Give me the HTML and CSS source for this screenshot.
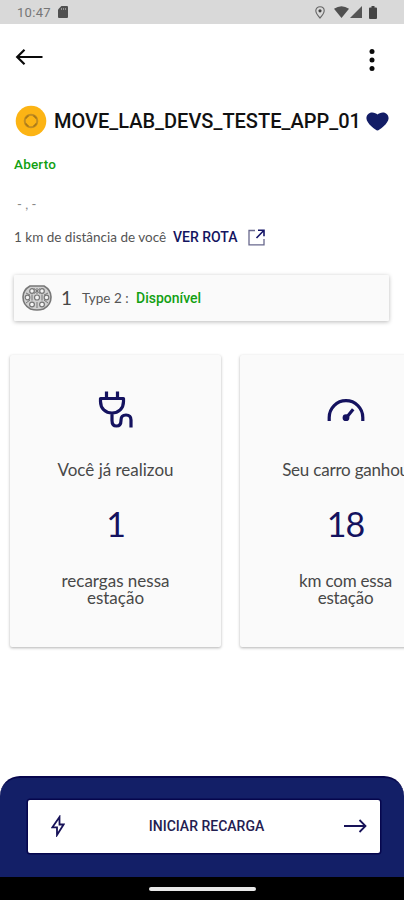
FILE: index.html
```html
<!DOCTYPE html>
<html lang="pt-BR">
<head>
<meta charset="utf-8">
<meta name="viewport" content="width=device-width, initial-scale=1">
<title>Estação de recarga</title>
<link rel="stylesheet" href="styles.css">
</head>
<body>
<div class="screen">
  <header class="status">
    <span class="clock">10:47</span>
    <svg class="sd" width="10" height="12" viewBox="0 0 10 12"><path d="M3.4 0H9q1 0 1 1v10q0 1-1 1H1q-1 0-1-1V3.6z" fill="#505050"/><path d="M3.5 2v2M5.5 2v2M7.5 2v2" stroke="#a5a5a5" stroke-width=".8"/></svg>
    <svg class="pin" width="10" height="13" viewBox="0 0 10 13"><path d="M5 .7C2.600.7.8 2.400.8 4.800.8 7.500 5 12 5 12s4.200-4.500 4.200-7.200C9.200 2.400 7.400.7 5 .7z" fill="none" stroke="#666" stroke-width="1.100"/><circle cx="5" cy="4.800" r="1.600" fill="#444"/></svg>
    <svg class="wifi" width="15" height="12" viewBox="0 0 15 12"><path d="M0 2.800Q7.500-2.400 15 2.800L7.500 12z" fill="#505050"/></svg>
    <svg class="signal" width="12" height="12" viewBox="0 0 12 12"><path d="M12 0v12H0z" fill="#555"/></svg>
    <svg class="battery" width="8" height="13" viewBox="0 0 8 13"><path d="M2.500 0h3v1.500H7q1 0 1 1V12q0 1-1 1H1q-1 0-1-1V2.500q0-1 1-1h1.500z" fill="#444"/></svg>
  </header>
  <nav class="appbar">
    <svg width="28" height="18" viewBox="0 0 28 18" fill="none" stroke="#0a0a0a" stroke-width="2.200"><path d="M27.500 9H2.500M9.500 1.700L2.200 9l7.300 7.300"/></svg>
    <svg class="menu" width="6" height="24" viewBox="0 0 6 24" fill="#0a0a0a"><circle cx="3" cy="3.500" r="2.500"/><circle cx="3" cy="12" r="2.500"/><circle cx="3" cy="20.500" r="2.500"/></svg>
  </nav>
  <main class="content">
    <div class="title-row">
      <svg class="badge" width="32" height="32" viewBox="0 0 32 32"><circle cx="16" cy="16" r="15.300" fill="#fcb414"/><circle cx="16" cy="16" r="6.300" fill="none" stroke="#c28e22" stroke-width="2"/><path d="M10.500 13.500l3-3M18.500 10.500l3 3M10.500 18.500l3 3M21.500 18.500l-3 3" stroke="#a87716" stroke-width="1.500"/></svg>
      <h1 class="title">MOVE_LAB_DEVS_TESTE_APP_01</h1>
      <svg class="heart" width="23" height="19" viewBox="0 0 23 19"><path d="M11.500 18.600C10 18.600.4 11.500.4 6.300.4 2.800 2.900.4 6.100.4c2.400 0 4.200 1 5.400 2.200C12.700 1.400 14.500.4 16.900.4c3.200 0 5.700 2.400 5.700 5.900 0 5.200-9.600 12.300-11.100 12.300z" fill="#131d66"/></svg>
    </div>
    <p class="open">Aberto</p>
    <p class="address">- , -</p>
    <div class="distance-row">
      <span class="distance">1 km de distância de você</span>
      <a class="route">VER ROTA</a>
      <svg width="17" height="17" viewBox="0 0 17 17" fill="none"><path d="M7 1.500H1v14.300h15V10" stroke="#68688d" stroke-width="1.300"/><path d="M10 1.200h6v6M16 1.200L8.500 9" stroke="#151568" stroke-width="1.600"/></svg>
    </div>
    <section class="connector">
      <svg class="plug-type" width="30" height="26" viewBox="0 0 30 26" fill="none" stroke="#777"><path d="M8 1h14q7 4 7 11 0 8-7.500 12-6.500 2-13 0Q1 20 1 12 1 5 8 1z" fill="#d0d0d0" stroke-width="1.600"/><g fill="#f4f4f4" stroke-width="1.200"><circle cx="10" cy="6" r="2.300"/><circle cx="20" cy="6" r="2.300"/><circle cx="5.500" cy="12.500" r="2.300"/><circle cx="15" cy="12.500" r="2.500"/><circle cx="24.500" cy="12.500" r="2.300"/><circle cx="10" cy="19.500" r="2.400"/><circle cx="20" cy="19.500" r="2.400"/></g><path d="M15 3v6M15 17v6M10 9.500v6M20 9.500v6M12 3.500l6 5M18 3.500l-6 5M4 18l4-3M26 18l-4-3M4 8l4 2M26 8l-4 2"/></svg>
      <span class="count">1</span>
      <span class="type">Type 2 :</span>
      <span class="available">Disponível</span>
    </section>
    <section class="stats">
      <article class="stat">
        <svg class="stat-icon" width="40" height="40" viewBox="0 0 40 40" fill="none" stroke="#14125f" stroke-width="3.200"><path d="M10.500 1.500v7M21.500 1.500v7M4.500 8.500h23v3c0 7-5 11.500-11.500 11.500S4.500 18.500 4.500 11.500zM16 23v7.500q0 5.500 4.500 5.500t4.500-5.500V30q0-5 5-5t5 5v7.500" stroke-linejoin="round"/></svg>
        <p class="lead">Você já realizou</p>
        <p class="value">1</p>
        <p class="note"><span>recargas nessa</span><span>estação</span></p>
      </article>
      <article class="stat range">
        <svg class="stat-icon" width="40" height="40" viewBox="0 0 40 40" fill="none" stroke="#14125f" stroke-width="3.200"><path d="M3.200 31v-3.500a16.800 16.800 0 0 1 33.600 0V31"/><path d="M20.500 27.500L27.200 19.300"/><circle cx="20" cy="27.700" r="3.400" fill="#14125f" stroke="none"/></svg>
        <p class="lead">Seu carro ganhou</p>
        <p class="value">18</p>
        <p class="note"><span>km com essa</span><span>estação</span></p>
      </article>
    </section>
  </main>
  <footer class="footer">
    <button class="start">
      <svg width="14" height="22" viewBox="0 0 14 22" fill="none" stroke="#171258" stroke-width="1.800"><path d="M8.500 2L1.400 12.300H6V20L12.600 9.500H8.500z"/></svg>
      <span class="start-label">INICIAR RECARGA</span>
      <svg width="23" height="14" viewBox="0 0 23 14" fill="none" stroke="#171258" stroke-width="1.800"><path d="M0 7h21M15.500 1l6 6-6 6"/></svg>
    </button>
  </footer>
  <div class="navbar"><span class="handle"></span></div>
</div>
</body>
</html>
```
FILE: styles.css
```css
* { box-sizing: border-box; }
body { margin: 0; background: #fff; }
p, h1 { margin: 0; }
svg { display: block; flex: none; }
.screen {
  width: 404px; height: 900px; overflow: hidden;
  display: flex; flex-direction: column;
  font-family: Lato, "Liberation Sans", sans-serif; color: #484848;
}
.status {
  height: 24px; background: #d9d9d9; flex: none;
  display: flex; align-items: center; padding: 0 27px 0 17px;
}
.clock { font: 400 13px/24px Roboto, sans-serif; color: #757575; width: 41px; letter-spacing: .3px; padding-top: 1px; }
.pin { margin-left: auto; margin-right: 9px; }
.wifi { margin-right: 1px; }
.signal { margin-right: 7px; }
.appbar {
  height: 66px; flex: none; display: flex; justify-content: space-between;
  align-items: center; padding: 0 29px 0 15px;
}
.menu { margin-top: 5px; }
.content { flex: 1; display: flex; flex-direction: column; min-height: 0; }
.title-row { height: 62px; display: flex; align-items: center; padding: 0 15px; white-space: nowrap; }
.title { font: 500 20px/24px Roboto, sans-serif; color: #111; margin-left: 7px; width: 306px; letter-spacing: 0; }
.heart { margin-left: 6px; }
.open { font: 500 13.500px/20px Roboto, sans-serif; color: #12a012; margin: 2px 0 0 14px; letter-spacing: .2px; }
.address { font-size: 13px; line-height: 20px; margin: 20px 0 0 17px; color: #888; }
.distance-row { height: 24px; margin-top: 11px; padding-left: 14px; display: flex; align-items: center; white-space: nowrap; }
.distance { font-size: 13.500px; width: 159px; color: #555; }
.route { font: 500 14px/20px Roboto, sans-serif; width: 75px; color: #14145f; }
.connector {
  height: 46px; width: 375px; margin: 26px 0 0 14px; padding-left: 8px; flex: none;
  display: flex; align-items: center; background: #fafafa; border-radius: 1px;
  box-shadow: 0 1px 4px rgba(0,0,0,.28); white-space: nowrap;
}
.count { font-size: 19px; line-height: 20px; width: 20px; margin: -1px 0 0 9px; }
.type { font-size: 13.500px; width: 54px; margin-left: 1px; color: #555; }
.available { font: 500 14px/20px Roboto, sans-serif; color: #12a012; }
.stats { display: flex; gap: 19px; margin: 34px 0 0 10px; }
.stat {
  width: 211px; height: 292px; flex: none; padding-top: 35px;
  display: flex; flex-direction: column; align-items: center; text-align: center;
  background: #fafafa; border-radius: 2px; box-shadow: 0 1px 3px rgba(0,0,0,.3);
  white-space: nowrap;
}
.lead { font-size: 17px; line-height: 20px; margin-top: 30px; }
.value { font-size: 34px; line-height: 40px; margin-top: 24px; color: #14125f; letter-spacing: -1px; }
.note { font-size: 17px; line-height: 17px; margin-top: 28px; }
.note span { display: block; }
.range .lead, .range .note { letter-spacing: -.2px; }
.footer {
  height: 101px; flex: none; background: #131f67; border-radius: 20px 20px 0 0;
  border-top: 2px solid #06064d; padding: 22px 24px 0 28px;
}
.start {
  width: 100%; height: 53px; border: 0; border-radius: 2px; background: #fff;
  box-shadow: 0 0 0 1.500px #06064d; padding: 0 13px 0 23px;
  display: flex; align-items: center; justify-content: space-between;
}
.start svg { margin-top: -1px; }
.start-label { font: 500 14px/20px Roboto, sans-serif; color: #242050; margin: -2px 0 0 4px; }
.navbar { height: 23px; flex: none; background: #000; display: flex; justify-content: center; align-items: center; }
.handle { width: 107px; height: 4px; border-radius: 2px; background: #e8e8e8; }
```
